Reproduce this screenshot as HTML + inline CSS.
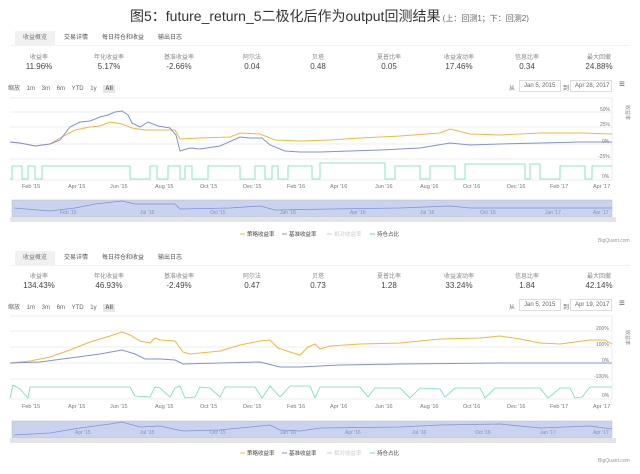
<!DOCTYPE html>
<html><head><meta charset="utf-8"><style>
*{margin:0;padding:0;box-sizing:border-box}
body{width:640px;height:474px;background:#fff;position:relative;overflow:hidden;font-family:"Liberation Sans","Noto Sans CJK SC",sans-serif;color:#555}
.a{position:absolute;white-space:nowrap}
.t{font-size:6px;color:#666}
.tab{position:absolute;font-size:6px;color:#555;height:14px;line-height:14px;text-align:center}
.act{background:#f1f1f1;color:#777}
.st{position:absolute;text-align:center;width:60px;margin-left:-30px}
.st .l{font-size:6px;color:#888}
.st .v{font-size:8px;color:#444;margin-top:1px}
.box{position:absolute;border:1px solid #ddd;font-size:6px;color:#666;height:12px;line-height:10px;padding-left:4px}
</style></head><body>
<div class="a" style="left:130px;top:6px;font-size:14px;color:#333">图5：future_return_5二极化后作为output回测结果<span style="font-size:8px;color:#666"> (上：回测1；下：回测2)</span></div>

<!-- Panel 1 -->
<div class="tab act" style="left:15px;top:31px;width:40px">收益概览</div>
<div class="tab" style="left:58px;top:31px;width:36px">交易详情</div>
<div class="tab" style="left:98px;top:31px;width:50px">每日持仓和收益</div>
<div class="tab" style="left:152px;top:31px;width:36px">输出日志</div>
<div style="position:absolute;left:10px;top:45px;width:620px;border-top:1px solid #f2f2f2"></div>
<div class="st" style="left:39px;top:52px"><div class="l">收益率</div><div class="v">11.96%</div></div>
<div class="st" style="left:109px;top:52px"><div class="l">年化收益率</div><div class="v">5.17%</div></div>
<div class="st" style="left:179px;top:52px"><div class="l">基准收益率</div><div class="v">-2.66%</div></div>
<div class="st" style="left:252px;top:52px"><div class="l">阿尔法</div><div class="v">0.04</div></div>
<div class="st" style="left:318px;top:52px"><div class="l">贝塔</div><div class="v">0.48</div></div>
<div class="st" style="left:389px;top:52px"><div class="l">夏普比率</div><div class="v">0.05</div></div>
<div class="st" style="left:459px;top:52px"><div class="l">收益波动率</div><div class="v">17.46%</div></div>
<div class="st" style="left:527px;top:52px"><div class="l">信息比率</div><div class="v">0.34</div></div>
<div class="st" style="left:599px;top:52px"><div class="l">最大回撤</div><div class="v">24.88%</div></div>
<div class="a t" style="left:8px;top:83px;word-spacing:5px">缩放 1m 3m 6m YTD 1y <b style="background:#e6e6e6;padding:1px 2px">All</b></div>
<div class="a t" style="left:509px;top:83px">从</div>
<div class="box" style="left:519px;top:80px;width:42px">Jan 5, 2015</div>
<div class="a t" style="left:563px;top:83px">到</div>
<div class="box" style="left:570px;top:80px;width:42px">Apr 28, 2017</div>
<div class="a" style="left:619px;top:79px;font-size:10px;color:#666">≡</div>

<svg class="a" style="left:0;top:95px" width="640" height="150">
<g stroke="#e6e6e6" stroke-width="0.7"><line x1="10" y1="3" x2="612" y2="3"/><line x1="10" y1="17" x2="612" y2="17"/><line x1="10" y1="32" x2="612" y2="32"/><line x1="10" y1="49" x2="612" y2="49"/><line x1="10" y1="64" x2="612" y2="64"/><line x1="10" y1="85" x2="612" y2="85"/><line x1="612" y1="3" x2="612" y2="85"/></g>
<g font-size="5" fill="#777"><text x="600" y="16">50%</text><text x="600" y="31">25%</text><text x="602" y="48">0%</text><text x="598" y="63">-25%</text><text x="602" y="83">0%</text></g>
<g font-size="5" fill="#888" transform="translate(626,10) rotate(90)"><text>收益率</text></g>
<g transform="translate(0,-95)">
<polyline fill="none" stroke="#f3b63f" stroke-width="1" points="10,142 20,143 35,146 50,144 60,138 75,130 90,127 100,126 110,122 122,124 132,128 145,130 175,130 180,139 200,138 230,137 240,133 260,134 265,136 275,140 300,141 330,140 360,138 400,136 440,133 450,129 470,134 500,135 540,133 580,133 612,134"/>
<polyline fill="none" stroke="#7f93d6" stroke-width="1" points="10,142 20,143 35,146 50,144 60,140 70,127 80,122 90,121 100,117 108,115 115,112 122,111 128,115 132,123 140,127 148,122 158,126 170,128 176,135 180,151 190,148 200,149 220,146 240,137 250,138 262,138 270,145 285,151 300,152 320,152 350,151 380,150 420,148 450,143 470,145 500,144 540,143 580,142 612,142"/>
<polyline fill="none" stroke="#6ee0b0" stroke-width="0.8" points="10,179 12,179 12,166 22,166 22,179 28,179 28,166 35,166 35,179 42,179 42,166 130,166 130,179 150,179 150,166 157,166 157,179 168,179 168,166 180,166 180,179 185,179 185,166 192,166 192,179 208,179 208,166 240,166 240,179 255,179 255,166 265,166 265,179 272,179 272,166 278,166 278,179 288,179 288,166 312,166 312,179 320,179 320,163 385,163 385,179 395,179 395,166 420,166 420,179 430,179 430,166 455,166 455,179 465,179 465,164 525,164 525,179 530,179 530,164 540,164 540,179 560,179 560,166 585,166 585,179 592,179 592,166 612,166"/>
<g font-size="5.5" fill="#777"><text x="22" y="188">Feb '15</text><text x="68" y="188">Apr '15</text><text x="110" y="188">Jun '15</text><text x="155" y="188">Aug '15</text><text x="200" y="188">Oct '15</text><text x="243" y="188">Dec '15</text><text x="287" y="188">Feb '16</text><text x="330" y="188">Apr '16</text><text x="375" y="188">Jun '16</text><text x="420" y="188">Aug '16</text><text x="463" y="188">Oct '16</text><text x="507" y="188">Dec '16</text><text x="550" y="188">Feb '17</text><text x="593" y="188">Apr '17</text></g>
<rect x="12" y="200" width="600" height="17" fill="#c9d3ee" stroke="#bbb" stroke-width="0.5"/>
<rect x="10" y="217" width="606" height="5" fill="#e4e4e4"/>
<polyline fill="none" stroke="#7f93d6" stroke-width="0.8" points="14,208 50,211 75,208 95,204 122,201 135,204 175,204 180,209 230,208 260,206 275,210 330,209 400,208 450,206 470,208 612,208"/>
<g font-size="5" fill="#8a93aa"><text x="60" y="214">Feb '15</text><text x="140" y="214">Jul '15</text><text x="210" y="214">Oct '15</text><text x="280" y="214">Jan '16</text><text x="350" y="214">Apr '16</text><text x="420" y="214">Jul '16</text><text x="480" y="214">Oct '16</text><text x="545" y="214">Jan '17</text><text x="593" y="214">Apr '17</text></g>
<g font-size="5.5" fill="#444"><line x1="240" y1="234" x2="245" y2="234" stroke="#f3b63f"/><text x="247" y="236">策略收益率</text><line x1="282" y1="234" x2="287" y2="234" stroke="#7f93d6"/><text x="289" y="236">基准收益率</text><line x1="327" y1="234" x2="332" y2="234" stroke="#ccc"/><text x="334" y="236" fill="#ccc">相对收益率</text><line x1="370" y1="234" x2="375" y2="234" stroke="#6ee0b0"/><text x="377" y="236">持仓占比</text></g>
<text x="598" y="242" font-size="5" fill="#999">BigQuant.com</text>
</g></svg>

<!-- Panel 2 -->
<div class="tab act" style="left:15px;top:251px;width:40px">收益概览</div>
<div class="tab" style="left:58px;top:251px;width:36px">交易详情</div>
<div class="tab" style="left:98px;top:251px;width:50px">每日持仓和收益</div>
<div class="tab" style="left:152px;top:251px;width:36px">输出日志</div>
<div style="position:absolute;left:10px;top:265px;width:620px;border-top:1px solid #f2f2f2"></div>
<div class="st" style="left:39px;top:271px"><div class="l">收益率</div><div class="v">134.43%</div></div>
<div class="st" style="left:109px;top:271px"><div class="l">年化收益率</div><div class="v">46.93%</div></div>
<div class="st" style="left:179px;top:271px"><div class="l">基准收益率</div><div class="v">-2.49%</div></div>
<div class="st" style="left:252px;top:271px"><div class="l">阿尔法</div><div class="v">0.47</div></div>
<div class="st" style="left:318px;top:271px"><div class="l">贝塔</div><div class="v">0.73</div></div>
<div class="st" style="left:389px;top:271px"><div class="l">夏普比率</div><div class="v">1.28</div></div>
<div class="st" style="left:459px;top:271px"><div class="l">收益波动率</div><div class="v">33.24%</div></div>
<div class="st" style="left:527px;top:271px"><div class="l">信息比率</div><div class="v">1.84</div></div>
<div class="st" style="left:599px;top:271px"><div class="l">最大回撤</div><div class="v">42.14%</div></div>
<div class="a t" style="left:8px;top:302px;word-spacing:5px">缩放 1m 3m 6m YTD 1y <b style="background:#e6e6e6;padding:1px 2px">All</b></div>
<div class="a t" style="left:509px;top:302px">从</div>
<div class="box" style="left:519px;top:299px;width:42px">Jan 5, 2015</div>
<div class="a t" style="left:563px;top:302px">到</div>
<div class="box" style="left:570px;top:299px;width:42px">Apr 19, 2017</div>
<div class="a" style="left:619px;top:298px;font-size:10px;color:#666">≡</div>

<svg class="a" style="left:0;top:0" width="640" height="474">
<g stroke="#e6e6e6" stroke-width="0.7"><line x1="10" y1="316" x2="612" y2="316"/><line x1="10" y1="331" x2="612" y2="331"/><line x1="10" y1="347" x2="612" y2="347"/><line x1="10" y1="363" x2="612" y2="363"/><line x1="10" y1="379" x2="612" y2="379"/><line x1="10" y1="399" x2="612" y2="399"/><line x1="612" y1="316" x2="612" y2="399"/></g>
<g font-size="5" fill="#777"><text x="596" y="330">200%</text><text x="596" y="346">100%</text><text x="602" y="362">0%</text><text x="594" y="378">-100%</text><text x="602" y="397">0%</text></g>
<g font-size="5" fill="#888" transform="translate(626,330) rotate(90)"><text>收益率</text></g>
<polyline fill="none" stroke="#f3b63f" stroke-width="1" points="10,363 30,361 50,357 70,350 90,342 110,336 122,332 130,335 140,341 150,343 155,338 160,340 175,341 183,352 190,354 200,353 220,351 240,345 260,341 270,340 278,348 290,352 300,355 308,347 315,344 320,349 330,346 360,344 400,343 440,339 480,338 500,336 520,339 540,343 560,344 590,340 605,340 612,344"/>
<polyline fill="none" stroke="#7f93d6" stroke-width="1" points="10,363 40,362 70,358 100,354 122,350 135,354 145,359 160,359 175,360 183,364 220,363 260,362 280,367 300,367 340,365 400,364 500,363 612,363"/>
<polyline fill="none" stroke="#6ee0b0" stroke-width="0.8" points="10,398 13,385 20,389 28,398 30,387 42,387 120,387 130,387 135,396 150,397 155,387 160,388 170,397 175,388 180,386 185,398 195,397 200,387 210,388 220,397 225,387 255,387 262,398 270,386 280,397 290,386 310,386 315,398 320,387 360,387 368,397 375,388 400,388 410,398 420,388 440,389 445,397 455,388 480,388 485,398 495,388 540,388 548,398 560,388 570,388 575,398 582,397 590,387 612,387"/>
<g font-size="5.5" fill="#777"><text x="22" y="408">Feb '15</text><text x="68" y="408">Apr '15</text><text x="110" y="408">Jun '15</text><text x="155" y="408">Aug '15</text><text x="200" y="408">Oct '15</text><text x="243" y="408">Dec '15</text><text x="287" y="408">Feb '16</text><text x="330" y="408">Apr '16</text><text x="375" y="408">Jun '16</text><text x="420" y="408">Aug '16</text><text x="463" y="408">Oct '16</text><text x="507" y="408">Dec '16</text><text x="550" y="408">Feb '17</text><text x="593" y="408">Apr '17</text></g>
<rect x="12" y="421" width="600" height="17" fill="#c9d3ee" stroke="#bbb" stroke-width="0.5"/>
<rect x="10" y="438" width="606" height="5" fill="#e4e4e4"/>
<polyline fill="none" stroke="#7f93d6" stroke-width="0.8" points="14,435 50,433 80,428 110,424 122,422 140,427 160,426 183,431 220,430 260,426 270,425 280,430 300,431 320,428 400,427 440,425 500,424 540,428 590,426 612,429"/>
<g font-size="5" fill="#8a93aa"><text x="75" y="434">Apr '15</text><text x="140" y="434">Jul '15</text><text x="210" y="434">Oct '15</text><text x="280" y="434">Jan '16</text><text x="345" y="434">Apr '16</text><text x="412" y="434">Jul '16</text><text x="475" y="434">Oct '16</text><text x="540" y="434">Jan '17</text><text x="593" y="434">Apr '17</text></g>
<g font-size="5.5" fill="#444"><line x1="240" y1="453" x2="245" y2="453" stroke="#f3b63f"/><text x="247" y="455">策略收益率</text><line x1="282" y1="453" x2="287" y2="453" stroke="#7f93d6"/><text x="289" y="455">基准收益率</text><line x1="327" y1="453" x2="332" y2="453" stroke="#ccc"/><text x="334" y="455" fill="#ccc">相对收益率</text><line x1="370" y1="453" x2="375" y2="453" stroke="#6ee0b0"/><text x="377" y="455">持仓占比</text></g>
<text x="598" y="462" font-size="5" fill="#999">BigQuant.com</text>
</svg>
</body></html>
